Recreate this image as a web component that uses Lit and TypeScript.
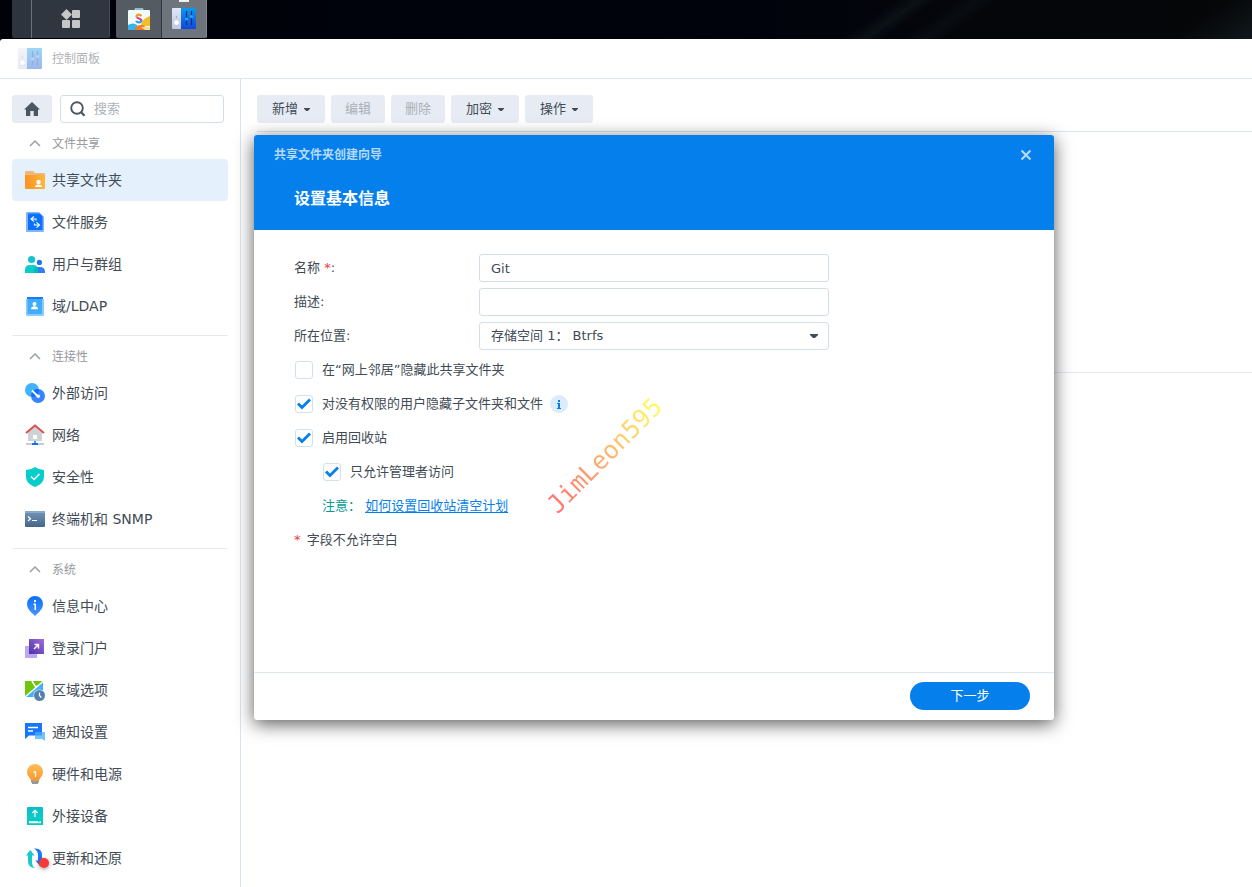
import { LitElement, html, svg, css, nothing, TemplateResult } from "lit";
import { customElement, property, state } from "lit/decorators.js";
import { classMap } from "lit/directives/class-map.js";

type Glyph = TemplateResult;

interface NavItem {
  label: string;
  icon: Glyph;
}

interface NavGroup {
  title: string;
  items: NavItem[];
}

const icons = {
  share: svg`
    <defs><linearGradient id="f1"><stop offset="0" stop-color="#fb9226"/><stop offset="1" stop-color="#fdb734"/></linearGradient></defs>
    <path d="M2 4.500Q2 3 3 3h7l2 2h9q1 0 1 1v4H2z" fill="#edb87a"/>
    <path d="M2 7h20v13q0 1-1 1H3q-1 0-1-1z" fill="url(#f1)"/>
    <circle cx="15.600" cy="14" r="2.200" fill="#fff"/><path d="M12 19q0-2.600 3.500-2.600T19 19z" fill="#fff"/>`,
  service: svg`
    <path d="M3 3q0-1 1-1h12l5 5v14q0 1-1 1H4q-1 0-1-1z" fill="#84b3fb"/>
    <path d="M5 3.500h11.500L19.500 6v14H5z" fill="#0a72fa"/>
    <path d="M11 6.300L8 9l3 2.700M8 9h5v1.500M13.500 12.300L16.500 15l-3 2.700M16.500 15h-5v-1.500" fill="none" stroke="#fff" stroke-width="1.100"/>`,
  users: svg`
    <circle cx="8.600" cy="7.500" r="3.600" fill="#16c4cf"/><circle cx="16.400" cy="10.400" r="2.600" fill="#2173f5"/>
    <path d="M11 21v-2q0-4 4-4h2q5 0 5 5v1z" fill="#2f7ff8"/>
    <path d="M2 21v-3q0-5 5-5h3q5 0 5 5v3z" fill="#07cdc8"/><path d="M11 21v-2q0-3 3-4 1 1 1 3v3z" fill="#08b5bf"/>`,
  ldap: svg`
    <path d="M4 3h16v4H4z" fill="#1a7bfb"/><path d="M3 5h18v16q0 1-1 1H4q-1 0-1-1z" fill="#8acdfd"/>
    <path d="M4.500 5H19v15H4.500z" fill="#42acfb"/>
    <circle cx="11.500" cy="10" r="2" fill="#fff"/><path d="M8 15.200q0-3 3.500-3t3.500 3z" fill="#fff"/>`,
  external: svg`
    <circle cx="9" cy="9" r="7" fill="#41b3fd"/><circle cx="15" cy="15" r="7" fill="#3685fc"/>
    <path d="M8.100 14A7 7 0 0 1 15.900 8.100A7 7 0 0 1 9.500 16z" fill="#0d6ef2"/>
    <path d="M9 9.500l5.500 5.500" stroke="#fff" stroke-width="1.800" fill="none"/><circle cx="15.300" cy="15.200" r="1.700" fill="#fff"/>`,
  network: svg`
    <path d="M5 9l7-6 7 6v9H5z" fill="#ced2d7"/><path d="M3 10l9-7.500L21 10" fill="none" stroke="#d9504e" stroke-width="2"/>
    <rect x="10" y="12" width="4" height="4" fill="#fff"/><path d="M3 20h18v2H3z" fill="#c8ccd2"/>
    <path d="M11.300 18h1.500v2H15v2H9v-2h2.300z" fill="#0d74ef"/>`,
  security: svg`
    <path d="M12 2q4 3 9 3v7q0 6.500-9 10Q3 18.500 3 12V5q5 0 9-3z" fill="#05cdca"/>
    <path d="M8 11.500l3 3 5.500-5.500" fill="none" stroke="#fff" stroke-width="1.500"/>`,
  terminal: svg`
    <defs><linearGradient id="t1" x2="0" y2="1"><stop offset="0" stop-color="#7696b8"/><stop offset="1" stop-color="#45658d"/></linearGradient></defs>
    <rect x="2" y="4" width="20" height="16" rx="1" fill="url(#t1)"/><path d="M2 4h20v2H2z" fill="#88a9ca"/>
    <path d="M5 9.500l2.500 2.200L5 14M9 13.500h5" fill="none" stroke="#fff" stroke-width="1.200"/>`,
  info: svg`
    <defs><linearGradient id="i1" x2="0" y2="1"><stop offset="0" stop-color="#0870f8"/><stop offset="1" stop-color="#4c95fd"/></linearGradient></defs>
    <path d="M12 2a8 8 0 0 1 8 8q0 5-6 10l-2 2-2-2Q4 15 4 10a8 8 0 0 1 8-8z" fill="url(#i1)"/>
    <path d="M11 6h2v2h-2zM10.500 9.500H13V16h-1.500v-5h-1z" fill="#fff"/>`,
  portal: svg`
    <defs><linearGradient id="p1" x1="0" y1="1" x2="1" y2="0"><stop offset="0" stop-color="#4932a8"/><stop offset="1" stop-color="#a66bd9"/></linearGradient></defs>
    <rect x="2" y="10" width="12" height="12" fill="#bda7f3"/><rect x="6" y="3" width="15" height="15" fill="url(#p1)"/>
    <path d="M11 13l4.500-4.500M11.500 8.500h4v4" fill="none" stroke="#fff" stroke-width="1.400"/>`,
  region: svg`
    <path d="M2 3h18v16H2z" fill="#3db1fc"/><path d="M2 3h18L4 17.500H2z" fill="#71c60b"/>
    <path d="M2 19L20 3.500M9 3l3 5 2 1" fill="none" stroke="#fff" stroke-width="1.500"/>
    <circle cx="16.500" cy="17.500" r="6" fill="#fff"/><circle cx="16.500" cy="17.500" r="5.500" fill="#5680ad"/>
    <path d="M16.500 14.500v3l1.800 2" fill="none" stroke="#fff" stroke-width="1.200"/>`,
  notify: svg`
    <path d="M2 3h17v12.500H6L2 19z" fill="#1677fb"/><path d="M5 7.500h10M5 11h5" stroke="#fff" stroke-width="1.300"/>
    <path d="M12 12h10v9l-3-2h-7z" fill="#75c3fe"/><path d="M12 12h7v3.500h-7z" fill="#3e9efc"/>`,
  power: svg`
    <defs><linearGradient id="b1" x2="0" y2="1"><stop offset="0" stop-color="#fdbf5a"/><stop offset="1" stop-color="#fa9628"/></linearGradient></defs>
    <path d="M12 2a8 8 0 0 1 8 8q0 3-2.300 5.500Q16 17 16 19H8q0-2-1.700-3.500Q4 13 4 10a8 8 0 0 1 8-8z" fill="url(#b1)"/>
    <path d="M8 19h8v1.500h-1V22H9v-1.500H8z" fill="#8e9aa8"/><path d="M10.500 10.500l1-.5h1V15" fill="none" stroke="#fff" stroke-width="1.300"/>`,
  device: svg`
    <defs><linearGradient id="d1" x2="0" y2="1"><stop offset="0" stop-color="#06bdca"/><stop offset="1" stop-color="#18d2c6"/></linearGradient></defs>
    <rect x="4" y="3" width="16" height="18" rx="1" fill="url(#d1)"/><path d="M4 15h16v6H4z" fill="#05c9c4"/>
    <path d="M12 13V6.500M9.300 9L12 6.300 14.700 9" fill="none" stroke="#fff" stroke-width="1.200"/>
    <path d="M6 17.200h12v2H6z" fill="#fff"/><path d="M15 17.200h1.500v1H15z" fill="#05c9c4"/>`,
  update: svg`
    <path d="M3 9.500L7.300 4l4.200 5.500H9V17q0 3 3 5-7 0-7-7V9.500z" fill="#16c9cc"/>
    <path d="M11 2.500q8-1 8 7v5h2.500L17 20l-4.500-5.500H15V9q0-4-4-6.500z" fill="#2077f7"/>
    <circle class="dot" cx="21" cy="17" r="5" fill="#fa3838"/>`,
};

const groups: NavGroup[] = [
  {
    title: "文件共享",
    items: [
      { label: "共享文件夹", icon: icons.share },
      { label: "文件服务", icon: icons.service },
      { label: "用户与群组", icon: icons.users },
      { label: "域/LDAP", icon: icons.ldap },
    ],
  },
  {
    title: "连接性",
    items: [
      { label: "外部访问", icon: icons.external },
      { label: "网络", icon: icons.network },
      { label: "安全性", icon: icons.security },
      { label: "终端机和 SNMP", icon: icons.terminal },
    ],
  },
  {
    title: "系统",
    items: [
      { label: "信息中心", icon: icons.info },
      { label: "登录门户", icon: icons.portal },
      { label: "区域选项", icon: icons.region },
      { label: "通知设置", icon: icons.notify },
      { label: "硬件和电源", icon: icons.power },
      { label: "外接设备", icon: icons.device },
      { label: "更新和还原", icon: icons.update },
    ],
  },
];

const tools = [
  { label: "新增", menu: true, disabled: false },
  { label: "编辑", menu: false, disabled: true },
  { label: "删除", menu: false, disabled: true },
  { label: "加密", menu: true, disabled: false },
  { label: "操作", menu: true, disabled: false },
];

const panelIcon = html`
  <svg class="panel-icon" width="26" height="24" viewBox="0 0 26 24" aria-hidden="true">
    <defs>
      <linearGradient id="c1" x2="0" y2="1"><stop offset="0" stop-color="#0b9bec" /><stop offset="1" stop-color="#1146dd" /></linearGradient>
      <linearGradient id="c2" x2="0" y2="1"><stop offset="0" stop-color="#e2e6f6" /><stop offset="1" stop-color="#c0c7e0" /></linearGradient>
    </defs>
    <path d="M2 1h8v21H2q-1 0-1-1V2q0-1 1-1z" fill="url(#c2)" />
    <path d="M10 1h14q1 0 1 1v19q0 1-1 1H10z" fill="url(#c1)" />
    <circle cx="5.500" cy="15.500" r="2.800" fill="#fff" stroke="#a9b1d0" stroke-width=".5" /><circle cx="5.500" cy="10" r=".7" fill="#8890b4" />
    <path d="M15.500 4v14M20.500 4v14" stroke="#0b2d77" stroke-width="1.200" />
    <circle cx="15.500" cy="12" r="1.600" fill="#2fa4ff" /><circle cx="20.500" cy="9.500" r="1.600" fill="#2fa4ff" />
  </svg>`;

const caret = (width: number) => html`<svg class="caret" width=${width} height=${width / 2} viewBox="0 0 8 4" aria-hidden="true"><path d="M0 0h8v1L5 4H3L0 1z" fill="currentColor" /></svg>`;

const reset = css`
  * { box-sizing: border-box; }
  button, input, select { font: inherit; color: inherit; margin: 0; }
  button { border: 0; padding: 0; background: none; cursor: pointer; }
  svg { display: block; flex: none; }
`;

@customElement("task-bar")
export class TaskBar extends LitElement {
  static styles = [reset, css`
    :host {
      display: flex; height: 39px; padding-left: 12px;
      background:
        linear-gradient(145deg, transparent 40%, #0b1115 54%, transparent 66%) 830px 0 / 110px 39px no-repeat,
        linear-gradient(145deg, transparent 40%, #090d11 54%, transparent 66%) 890px 0 / 110px 39px no-repeat,
        linear-gradient(145deg, transparent 50%, #10181c 100%) right / 100px 39px no-repeat,
        linear-gradient(90deg, #00020a 0, #00030c 60%, #050609 80%, #060709 100%);
    }
    .bar { display: flex; height: 38px; border-radius: 0 0 2px 2px; overflow: hidden; }
    .bar + .bar { margin-left: 6px; }
    button { display: grid; place-items: center; height: 38px; }
    .desk { width: 19px; background: #2d343d; }
    .menu { width: 79px; background: #2f363f; border-left: 1px solid #697078; border-right: 1px solid #454c54; }
    .app { width: 46px; background: #555b62; border-right: 1px solid #30363e; }
    .app.on { width: 45px; background: #6d747b; border-right: 1px solid #83898f; position: relative; }
    .app.on::before { content: ""; position: absolute; top: 0; left: 17px; width: 10px; height: 2px; background: #f1f1f1; }
  `];

  render() {
    return html`
      <div class="bar">
        <button class="desk" aria-label="显示桌面"></button>
        <button class="menu" aria-label="主菜单">
          <svg width="20" height="20" viewBox="0 0 20 20">
            <path d="M5.500 0L11 5.500 5.500 11 0 5.500z" fill="#c4c6c8" />
            <rect x="11" y="1" width="8" height="8" rx="1" fill="#c4c6c8" />
            <rect x="1" y="11" width="8" height="8" rx="1" fill="#c4c6c8" /><rect x="11" y="11" width="8" height="8" rx="1" fill="#c4c6c8" />
          </svg>
        </button>
      </div>
      <div class="bar">
        <button class="app" aria-label="套件中心">
          <svg width="22" height="24" viewBox="0 0 22 24">
            <path d="M7.500 4V2h7v2" fill="none" stroke="#a9d9ed" stroke-width="1.500" />
            <rect y="3" width="22" height="20" rx="1" fill="#f2fbfb" />
            <path d="M22 9v10h-9q0-7 9-10z" fill="#f5bd28" /><path d="M0 18q5-3 9 0v5H0z" fill="#36b4e8" />
            <path d="M7 23q0-5 6-5 5 0 5 5z" fill="#f07c32" /><path d="M13 20h9v3h-5z" fill="#fbdd91" />
            <path d="M13.500 9Q12 7.300 9.800 7.800 7.800 8.800 9 10.500" fill="none" stroke="#f0982b" stroke-width="2.200" />
            <path d="M9 10.500q1 .8 2.500 1.200 2 .8 2 2.300" fill="none" stroke="#e8348d" stroke-width="2.200" />
            <path d="M13.500 13.500q-.5 2-3 1.800-1.800-.2-2.500-1.300" fill="none" stroke="#26a7e8" stroke-width="2.200" />
          </svg>
        </button>
        <button class="app on" aria-label="控制面板">${panelIcon}</button>
      </div>`;
  }
}

@customElement("side-nav")
export class SideNav extends LitElement {
  @state() private current = "共享文件夹";

  static styles = [reset, css`
    :host { display: block; width: 241px; flex: none; padding: 16px 12px 8px; border-right: 1px solid #dbe3ed; }
    .top { display: flex; gap: 8px; padding-right: 4px; margin-bottom: 4px; }
    .home { display: grid; place-items: center; width: 40px; height: 28px; border-radius: 3px; background: #e7ecf4; color: #4b5661; }
    .search { display: flex; align-items: center; gap: 8px; flex: 1; min-width: 0; height: 28px; padding: 0 9px; border: 1px solid #d2dfea; border-radius: 3px; color: #4b5661; }
    .search input { flex: 1; min-width: 0; border: 0; padding: 0; outline: 0; background: none; font-size: 13px; }
    .search input::placeholder { color: #adb2b9; opacity: 1; }
    .title { display: flex; align-items: center; gap: 5px; width: 100%; height: 32px; padding: 2px 0 0 11px; font-size: 12px; line-height: 16px; color: #95999e; }
    .item { display: flex; align-items: center; gap: 5px; height: 42px; padding-left: 11px; border-radius: 4px; font-size: 14px; line-height: 20px; color: #414b55; text-decoration: none; }
    .item svg { overflow: visible; }
    .item.on { background: #e4f0fc; }
    .dot { filter: drop-shadow(0 1px 2px rgba(0, 0, 0, .4)); }
    section + section { margin-top: 8px; padding-top: 4px; border-top: 1px solid #e7eaf1; }
  `];

  private pick(e: Event, label: string) {
    e.preventDefault();
    this.current = label;
  }

  render() {
    return html`
      <div class="top">
        <button class="home" aria-label="主页">
          <svg width="16" height="14" viewBox="0 0 16 14"><path d="M8 0l8 7.500h-2V14H9.700V9H6.300v5H2V7.500H0z" fill="currentColor" /></svg>
        </button>
        <label class="search">
          <svg width="16" height="16" viewBox="0 0 16 16"><circle cx="7" cy="7" r="5.800" fill="none" stroke="currentColor" stroke-width="1.900" /><path d="M10.800 10.800l3.700 4" stroke="currentColor" stroke-width="2.200" /></svg>
          <input type="search" placeholder="搜索" aria-label="搜索" />
        </label>
      </div>
      <nav>
        ${groups.map((g) => html`
          <section>
            <button class="title">
              <svg width="24" height="16" viewBox="0 0 24 16"><path d="M7 10l5-5 5 5" fill="none" stroke="#999fa6" stroke-width="1.500" /></svg>
              <span>${g.title}</span>
            </button>
            ${g.items.map((i) => html`
              <a class=${classMap({ item: true, on: i.label === this.current })} href="#" @click=${(e: Event) => this.pick(e, i.label)}>
                <svg width="24" height="24" viewBox="0 0 24 24" aria-hidden="true">${i.icon}</svg>
                <span>${i.label}</span>
              </a>`)}
          </section>`)}
      </nav>`;
  }
}

@customElement("check-row")
export class CheckRow extends LitElement {
  @property() label = "";
  @property({ type: Boolean }) checked = false;

  static styles = [reset, css`
    :host { display: flex; align-items: center; height: 28px; padding-left: 1px; }
    label { display: flex; align-items: center; gap: 9px; }
    .box { display: grid; place-items: center; }
    .box > * { grid-area: 1 / 1; }
    input { appearance: none; width: 18px; height: 18px; border: 1px solid #d2e0ec; border-radius: 3px; background: #fff; }
    svg { pointer-events: none; }
  `];

  render() {
    return html`
      <label>
        <span class="box">
          <input type="checkbox" .checked=${this.checked} @change=${(e: Event) => (this.checked = (e.target as HTMLInputElement).checked)} />
          ${this.checked
            ? html`<svg width="14" height="12" viewBox="0 0 14 12"><path d="M1 5.500l4 4L13 1.500" fill="none" stroke="#057feb" stroke-width="2.800" /></svg>`
            : nothing}
        </span>
        <span>${this.label}</span>
      </label>
      <slot></slot>`;
  }
}

@customElement("folder-wizard")
export class FolderWizard extends LitElement {
  static styles = [reset, css`
    :host { display: flex; flex-direction: column; border-radius: 3px; background: #fff; box-shadow: 0 4px 18px rgba(0, 0, 0, .65); color: #414b55; font-size: 13px; line-height: 20px; }
    header { height: 95px; padding: 0 20px; border-radius: 3px 3px 0 0; background: #057feb; color: #fff; }
    .bar { display: flex; align-items: center; justify-content: space-between; height: 40px; }
    h1 { margin: 0; font-size: 12px; line-height: 16px; color: #b4d9fa; }
    .close { display: grid; place-items: center; width: 16px; height: 16px; color: #b4d9fa; }
    h2 { margin: 12px 20px 0; font-size: 16px; line-height: 24px; }
    form { display: flex; flex-direction: column; flex: 1; gap: 6px; padding: 24px 40px; }
    .row { display: grid; grid-template-columns: 185px minmax(0, 350px); align-items: center; height: 28px; }
    .field { width: 100%; height: 28px; padding: 0 11px; border: 1px solid #d2dfea; border-radius: 3px; background: #fff; outline: 0; }
    .pick { display: grid; align-items: center; }
    .pick > * { grid-area: 1 / 1; }
    .pick select { appearance: none; }
    .pick .caret { justify-self: end; margin-right: 11px; pointer-events: none; }
    .req { color: #e64040; }
    .nest { margin-left: 28px; }
    .info { display: grid; place-items: center; width: 18px; height: 18px; margin-left: 7px; border-radius: 9px; background: #dcecfd; }
    p { display: flex; align-items: center; height: 28px; margin: 0; white-space: pre; }
    .foot { gap: 2px; }
    .note { color: #0a9b94; }
    a { color: #057feb; text-underline-offset: 2px; }
    footer { display: flex; justify-content: flex-end; padding: 9px 24px 10px; border-top: 1px solid #dfe7ee; }
    .next { width: 120px; height: 28px; border-radius: 14px; background: #057feb; color: #fff; }
    .mark { position: absolute; left: 351px; top: 321px; transform: translate(-50%, -50%) rotate(-45deg); font: 25px/32px "DejaVu Sans Mono", monospace; color: transparent; background: linear-gradient(90deg, #ff7070, #ffb070 50%, #ffff60); background-clip: text; -webkit-background-clip: text; pointer-events: none; }
  `];

  render() {
    return html`
      <header>
        <div class="bar">
          <h1>共享文件夹创建向导</h1>
          <button class="close" aria-label="关闭">
            <svg width="10" height="10" viewBox="0 0 10 10"><path d="M.5 .5l9 9M9.500 .5l-9 9" stroke="currentColor" stroke-width="2.200" /></svg>
          </button>
        </div>
        <h2>设置基本信息</h2>
      </header>
      <form @submit=${(e: Event) => e.preventDefault()}>
        <div class="row">
          <label for="name">名称 <span class="req">*</span>:</label>
          <input class="field" id="name" type="text" value="Git" />
        </div>
        <div class="row">
          <label for="desc">描述:</label>
          <input class="field" id="desc" type="text" />
        </div>
        <div class="row">
          <label for="place">所在位置:</label>
          <div class="pick">
            <select class="field" id="place"><option>存储空间 1： Btrfs</option></select>
            ${caret(8)}
          </div>
        </div>
        <check-row label="在“网上邻居”隐藏此共享文件夹"></check-row>
        <check-row label="对没有权限的用户隐藏子文件夹和文件" checked>
          <button class="info" type="button" aria-label="说明">
            <svg width="4" height="9" viewBox="0 0 4 9"><path d="M1 0h2v2H1zM0 3h3v5h1v1H0V8h1V4H0z" fill="#057feb" /></svg>
          </button>
        </check-row>
        <check-row label="启用回收站" checked></check-row>
        <check-row class="nest" label="只允许管理者访问" checked></check-row>
        <p class="nest"><span class="note">注意： </span><a href="#">如何设置回收站清空计划</a></p>
        <p class="foot"><span class="req">* </span>字段不允许空白</p>
      </form>
      <footer><button class="next">下一步</button></footer>
      <span class="mark">JimLeon595</span>`;
  }
}

@customElement("app-root")
export class AppRoot extends LitElement {
  static styles = [reset, css`
    :host { display: flex; flex-direction: column; min-height: 100vh; overflow: hidden; background: #000208; font-family: "DejaVu Sans", "Noto Sans CJK SC", sans-serif; font-size: 13px; line-height: 20px; color: #414b55; }
    .window { position: relative; display: flex; flex-direction: column; flex: 1; border-radius: 3px 0 0 0; background: #fff; }
    .caption { display: flex; align-items: center; gap: 9px; height: 40px; padding-left: 17px; border-bottom: 1px solid #dfe7ee; font-size: 12px; line-height: 16px; color: #b0b3b6; }
    .caption .panel-icon { opacity: .4; }
    .body { display: flex; flex: 1; }
    main { flex: 1; min-width: 0; padding: 16px 0 0 16px; }
    .tools { display: flex; gap: 6px; padding-bottom: 8px; }
    .tools button { display: flex; align-items: center; justify-content: center; gap: 6px; min-width: 54px; height: 28px; padding: 0 13px; border-radius: 3px; background: #e7ecf4; }
    .tools .menu { min-width: 68px; }
    .tools button:disabled { color: #a9b0b9; cursor: default; }
    .list { height: 242px; border: solid #dde4ec; border-width: 1px 0; border-bottom-color: #e7eaf1; }
    .dialog { position: absolute; left: 254px; top: 96px; width: 800px; height: 585px; }
  `];

  render() {
    return html`
      <task-bar></task-bar>
      <div class="window">
        <div class="caption">${panelIcon}<span>控制面板</span></div>
        <div class="body">
          <side-nav></side-nav>
          <main>
            <div class="tools">
              ${tools.map((t) => html`<button class=${classMap({ menu: t.menu })} ?disabled=${t.disabled}><span>${t.label}</span>${t.menu ? caret(6) : nothing}</button>`)}
            </div>
            <div class="list"></div>
          </main>
        </div>
        <folder-wizard class="dialog" role="dialog" aria-label="共享文件夹创建向导"></folder-wizard>
      </div>`;
  }
}
